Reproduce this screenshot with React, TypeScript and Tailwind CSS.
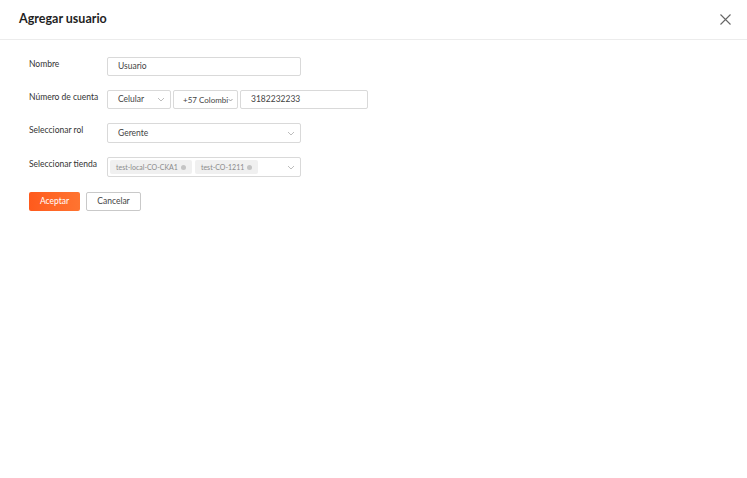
import React from 'react';

const Chevron = () => (
    <svg width="8" height="5" viewBox="0 0 8 5" fill="none" className="shrink-0">
        <path d="M1 1l3 3 3-3" stroke="#b5b5b5" strokeWidth="0.9" />
    </svg>
);

const Tag = ({ label }: { label: string }) => (
    <span className="flex h-[14px] items-center gap-[3px] rounded-[2px] bg-[#f0f0f0] px-[6px] text-[7px] text-[#8a8a8a]">
        {label}
        <span className="h-[5px] w-[5px] rounded-full bg-[#c4c4c4]" />
    </span>
);

const Row = ({ label, children }: { label: string; children: React.ReactNode }) => (
    <div className="flex items-start">
        <div className="w-[78px] pt-[1px] text-[8.5px] leading-[12px] text-[#333]">{label}</div>
        {children}
    </div>
);

export default function App() {
    return (
        <div className="h-[478px] w-[747px] bg-white" style={{ fontFamily: 'Lato, "Noto Sans", sans-serif' }}>
            <header className="flex h-[40px] items-center justify-between border-b border-[#ececec] pl-[19px] pr-[16px]">
                <h1 className="text-[12.5px] font-bold text-[#1f1f1f]">Agregar usuario</h1>
                <svg width="11" height="11" viewBox="0 0 11 11" className="mt-[-1px]">
                    <path d="M0.5 0.5l10 10M10.5 0.5l-10 10" stroke="#666" strokeWidth="1.1" />
                </svg>
            </header>

            <div className="flex flex-col gap-[14px] pl-[29px] pt-[17px] text-[8.5px] text-[#444]">
                <Row label="Nombre">
                    <div className="flex h-[19px] w-[194px] items-center rounded-[2px] border border-[#d9d9d9] px-[10px]">Usuario</div>
                </Row>
                <Row label="Número de cuenta">
                    <div className="flex gap-[2px]">
                        <div className="flex h-[19px] w-[64px] items-center justify-between rounded-[2px] border border-[#d9d9d9] pl-[10px] pr-[5px]">
                            Celular
                            <Chevron />
                        </div>
                        <div className="flex h-[19px] w-[65px] items-center rounded-[2px] border border-[#d9d9d9] pl-[9px] pr-[2px]">
                            <span className="whitespace-nowrap text-[8px]">+57 Colombi</span>
                            <svg width="5" height="4" viewBox="0 0 5 4" fill="none" className="shrink-0">
                                <path d="M0.5 1l2 2 2-2" stroke="#888" strokeWidth="0.8" />
                            </svg>
                        </div>
                        <div className="flex h-[19px] w-[128px] items-center rounded-[2px] border border-[#d9d9d9] px-[10px]">3182232233</div>
                    </div>
                </Row>
                <Row label="Seleccionar rol">
                    <div className="flex h-[20px] w-[194px] items-center justify-between rounded-[2px] border border-[#d9d9d9] pl-[10px] pr-[5px]">
                        Gerente
                        <Chevron />
                    </div>
                </Row>
                <Row label="Seleccionar tienda">
                    <div className="flex h-[20px] w-[194px] items-center justify-between rounded-[2px] border border-[#d9d9d9] pl-[2px] pr-[5px]">
                        <div className="flex gap-[3px]">
                            <Tag label="test-local-CO-CKA1" />
                            <Tag label="test-CO-1211" />
                        </div>
                        <Chevron />
                    </div>
                </Row>
                <div className="mt-[1px] flex gap-[6px]">
                    <button className="h-[19px] w-[51px] rounded-[2px] bg-gradient-to-r from-[#ff5a1c] to-[#ff7430] text-[8.5px] text-white">
                        Aceptar
                    </button>
                    <button className="h-[19px] w-[55px] rounded-[2px] border border-[#c9c9c9] bg-white text-[8.5px] text-[#444]">
                        Cancelar
                    </button>
                </div>
            </div>
        </div>
    );
}
